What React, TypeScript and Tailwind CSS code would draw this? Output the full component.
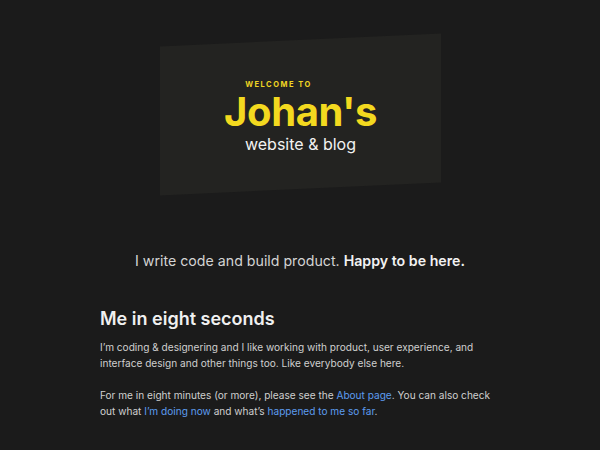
export default function App() {
  return (
    <div className="min-h-[450px] bg-[#1b1b1b] font-['Inter',sans-serif] text-[#d6d6d6]">
      {/* Hero plate */}
      <div className="pt-[40px] flex justify-center">
        <div className="w-[281px] h-[149px] bg-[#232321] -skew-y-[2.6deg]">
          <div className="skew-y-[2.6deg] flex flex-col items-center pt-[39px]">
            <p className="text-[7.5px] leading-[11px] font-bold tracking-[0.2em] text-[#f0d523] mr-[44px]">
              WELCOME TO
            </p>
            <h1 className="text-[40px] leading-none font-bold tracking-[-0.01em] text-[#f3d91f] mt-[2px]">
              Johan's
            </h1>
            <p className="text-[16px] leading-[20px] text-[#f2f2f2] mt-[2px]">website &amp; blog</p>
          </div>
        </div>
      </div>

      <p className="mt-[61px] text-center text-[14.2px] leading-[22px] text-[#d4d4d4]">
        I write code and build product. <strong className="font-semibold text-[#f2f2f2]">Happy to be here.</strong>
      </p>

      <section className="w-[400px] mx-auto mt-[35px]">
        <h2 className="text-[18px] leading-[24px] font-semibold text-[#f0f0f0]">Me in eight seconds</h2>
        <p className="mt-[9px] text-[10.1px] leading-[15.5px] text-[#cfcfcf]">
          I’m coding &amp; designering and I like working with product, user experience, and interface design and
          other things too. Like everybody else here.
        </p>
        <p className="mt-[17px] text-[10.1px] leading-[15.5px] text-[#cfcfcf]">
          For me in eight minutes (or more), please see the{' '}
          <a href="#" className="text-[#5d9cef]">About page</a>. You can also check out what{' '}
          <a href="#" className="text-[#5d9cef]">I’m doing now</a> and what’s{' '}
          <a href="#" className="text-[#5d9cef]">happened to me so far</a>.
        </p>
      </section>
    </div>
  );
}
